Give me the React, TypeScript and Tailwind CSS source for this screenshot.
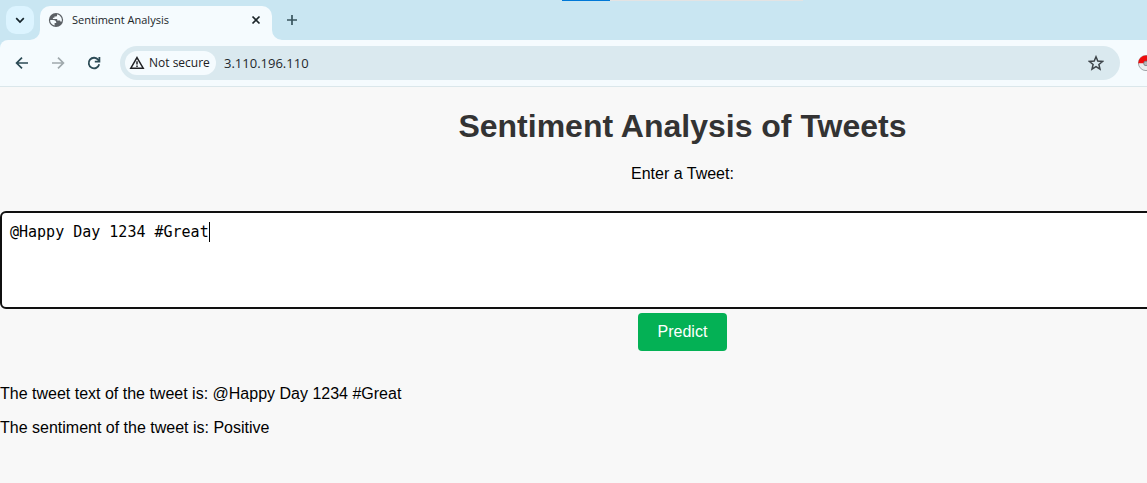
import { useState } from "react";

function TabFlare({ flip = false }: { flip?: boolean }) {
  return (
    <svg
      viewBox="0 0 10 10"
      aria-hidden="true"
      className={
        flip
          ? "absolute bottom-0 left-full size-[10px] -scale-x-100 fill-[#f5fbfe]"
          : "absolute right-full bottom-0 size-[10px] fill-[#f5fbfe]"
      }
    >
      <path d="M10 0V10H0A10 10 0 0 0 10 0Z" />
    </svg>
  );
}

function BrowserTabs() {
  return (
    <div className="relative flex h-10 items-end bg-[#c9e6f2] pl-1.5">
      <div aria-hidden="true" className="absolute top-0 left-[49%] flex h-px w-[21%] bg-[#e3e3e3]">
        <span className="w-1/5 bg-[#0078d7]" />
      </div>
      <button
        type="button"
        aria-label="Search tabs"
        className="mb-1.5 flex size-7 items-center justify-center rounded-[10px] bg-[#dcf4ff]"
      >
        <svg viewBox="0 0 10 10" className="size-[10px] fill-none stroke-[#15242b] stroke-[1.7]">
          <path d="M1.2 3.2 5 7 8.8 3.2" />
        </svg>
      </button>
      <div className="relative ml-1.5 flex h-[34px] w-[232px] items-center rounded-t-[10px] bg-[#f5fbfe] pr-2.5 pb-1.5 pl-2">
        <TabFlare />
        <TabFlare flip />
        <svg viewBox="0 0 16 16" aria-hidden="true" className="size-4">
          <circle cx="8" cy="8" r="7.1" fill="#5b6065" />
          <path
            d="M2.1 8.1h3.1c2.1 0 3.1 1 3.1 2.9H6.6v2.5C3.9 13 2 10.9 2.1 8.1Z"
            fill="#f5fbfe"
          />
          <path
            d="M9.1 2.2v.7c0 1-.6 1.5-1.6 1.5H6.4v1.4H4.9v1.1h4.3v1.5h3v1.1h1.6c.6-3.2-1.2-6.3-4.7-7.3Z"
            fill="#f5fbfe"
          />
        </svg>
        <span className="ml-2 font-['Open_Sans',sans-serif] text-[11px] leading-4 text-[#202629]">
          Sentiment Analysis
        </span>
        <button type="button" aria-label="Close tab" className="ml-auto flex size-3 items-center justify-center">
          <svg viewBox="0 0 12 12" className="size-3 fill-none stroke-[#1b2529] stroke-[1.7]">
            <path d="m2.5 2.5 7 7m0-7-7 7" />
          </svg>
        </button>
      </div>
      <button type="button" aria-label="New tab" className="mb-3.5 ml-3.5 flex size-3 items-center justify-center">
        <svg viewBox="0 0 12 12" className="size-3 fill-none stroke-[#38545e] stroke-[1.7]">
          <path d="M6 1v10M1 6h10" />
        </svg>
      </button>
    </div>
  );
}

function BrowserToolbar() {
  return (
    <div className="bg-[#c9e6f2]">
      <div className="flex h-[47px] items-center overflow-hidden rounded-tl-lg border-b border-[#dbe7eb] bg-[#f5fbfe] pl-3.5">
        <button type="button" aria-label="Back" className="size-4">
          <svg viewBox="0 0 16 16" className="size-4 fill-none stroke-[#2c4b56] stroke-[1.7]">
            <path d="M14 8H3M8 2.6 2.6 8 8 13.4" />
          </svg>
        </button>
        <button type="button" aria-label="Forward" className="ml-5 size-4">
          <svg viewBox="0 0 16 16" className="size-4 fill-none stroke-[#a0a9ad] stroke-[1.7]">
            <path d="M2 8h11M8 2.6 13.4 8 8 13.4" />
          </svg>
        </button>
        <button type="button" aria-label="Reload" className="ml-5 size-4">
          <svg viewBox="0 0 16 16" className="size-4 fill-none stroke-[#2c4b56] stroke-[1.8]">
            <path d="M13.2 9.2A5.3 5.3 0 1 1 12.3 4.9L13.3 6.2" />
            <path d="M13.4 2v4.6H8.8" />
          </svg>
        </button>
        <div className="ml-[18px] flex h-[34px] flex-1 items-center rounded-full bg-[#dae9ef] pr-4 pl-[5px]">
          <button
            type="button"
            className="flex h-6 w-[91px] items-center gap-1 rounded-full bg-[#f5fbfe] pl-1 font-['Open_Sans',sans-serif] text-xs font-medium whitespace-nowrap text-[#202124]"
          >
            <svg
              viewBox="0 0 16 16"
              aria-hidden="true"
              className="size-4 shrink-0 fill-none stroke-[#202124] stroke-[1.5]"
            >
              <path d="M8 2.6 14.2 13.2H1.8Z" />
              <path d="M8 6.2v3.4M8 10.4v1.5" />
            </svg>
            Not secure
          </button>
          <input
            type="text"
            aria-label="Address"
            defaultValue="3.110.196.110"
            className="ml-2 min-w-0 flex-1 bg-transparent font-['Open_Sans',sans-serif] text-[13px] leading-5 text-[#23282c] outline-none"
          />
          <button type="button" aria-label="Bookmark this page" className="size-4">
            <svg viewBox="0 0 16 16" className="size-4 fill-none stroke-[#3e454a] stroke-[1.5]">
              <path d="m8 1.8 1.8 4.3 4.7.4-3.6 3 1.1 4.6L8 11.7l-4 2.4 1.1-4.6-3.6-3 4.7-.4Z" />
            </svg>
          </button>
        </div>
        <button type="button" aria-label="Extension" className="-mr-[7px] ml-[18px] size-4 shrink-0">
          <svg viewBox="0 0 16 16" className="size-4">
            <circle cx="8" cy="8" r="7.6" fill="#e9eeee" stroke="#8b9295" strokeWidth=".8" />
            <path d="M.2 8.2a7.8 7.8 0 0 1 15.6 0Z" fill="#ee0c0c" />
            <circle cx="8" cy="8.4" r="2.3" fill="#b4b9bb" stroke="#767c7f" strokeWidth=".8" />
          </svg>
        </button>
      </div>
    </div>
  );
}

export default function App() {
  const [tweet, setTweet] = useState("@Happy Day 1234 #Great");
  const [submitted, setSubmitted] = useState(tweet);

  return (
    <div className="min-h-screen overflow-x-hidden bg-[#f8f8f8] font-['Liberation_Sans',Arial,sans-serif] text-base leading-[18px] text-black">
      <header>
        <BrowserTabs />
        <BrowserToolbar />
      </header>
      <main className="w-[119%] pt-5">
        <form
          className="flex flex-col items-center"
          onSubmit={(event) => {
            event.preventDefault();
            setSubmitted(tweet);
          }}
        >
          <h1 className="text-[32px] leading-[38px] font-bold text-[#333333]">Sentiment Analysis of Tweets</h1>
          <label htmlFor="tweet" className="mt-5">
            Enter a Tweet:
          </label>
          <div className="relative mt-7 w-full">
            <textarea
              id="tweet"
              value={tweet}
              onChange={(event) => setTweet(event.target.value)}
              className="block h-[98px] w-full resize-none rounded-md border-2 border-[#101010] bg-white p-2 font-['DejaVu_Sans_Mono',monospace] text-[15px] leading-[22px] caret-transparent outline-none"
            />
            <div
              aria-hidden="true"
              className="pointer-events-none absolute top-2.5 left-2.5 flex items-center font-['DejaVu_Sans_Mono',monospace] text-[15px] leading-[22px]"
            >
              <span className="invisible whitespace-pre">{tweet}</span>
              <span className="h-5 w-px bg-black" />
            </div>
          </div>
          <button
            type="submit"
            className="mt-1 rounded bg-[#04b155] px-5 py-2.5 text-white"
          >
            Predict
          </button>
        </form>
        <section aria-live="polite" className="mt-[34px] flex flex-col gap-4">
          <p>The tweet text of the tweet is: {submitted}</p>
          <p>The sentiment of the tweet is: Positive</p>
        </section>
      </main>
    </div>
  );
}
